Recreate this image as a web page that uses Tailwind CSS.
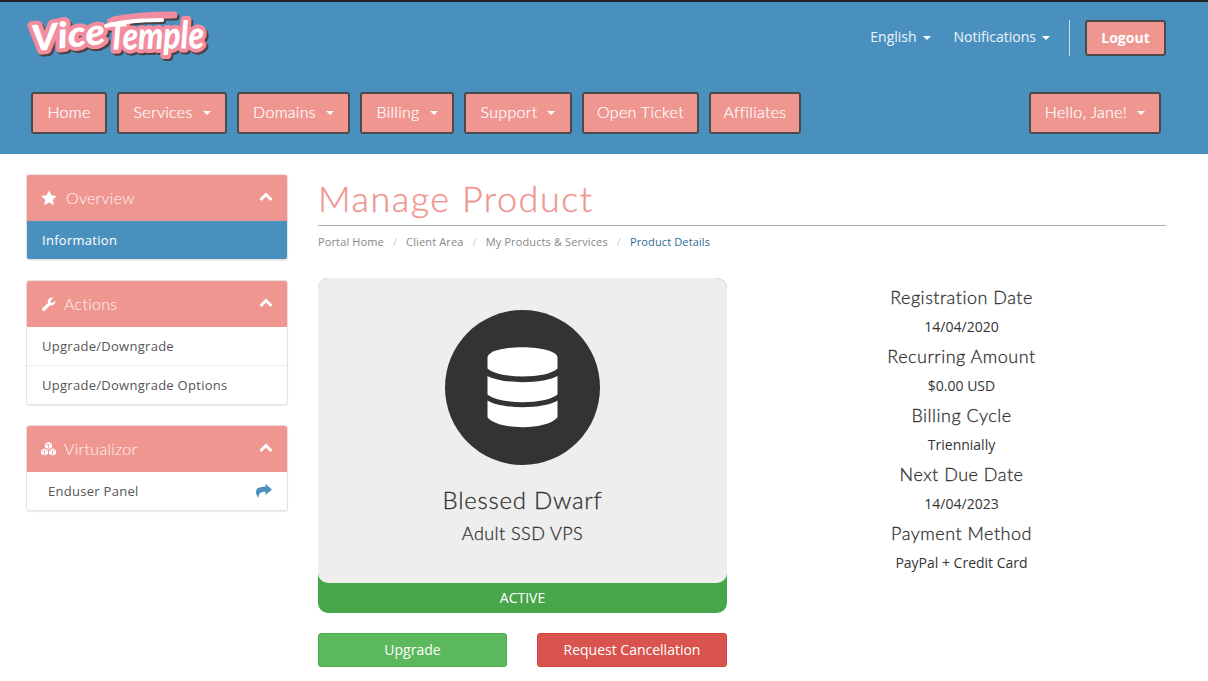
<!DOCTYPE html>
<html lang="en">
<head>
<meta charset="utf-8">
<title>Manage Product</title>
<script src="https://cdn.jsdelivr.net/npm/@tailwindcss/browser@4"></script>
</head>
<body class="bg-white font-['Open_Sans',sans-serif] text-[#333] text-sm overflow-hidden h-[681px]">
<header class="h-[154px] bg-[#4a90bf] border-t-2 border-[#222] flex flex-col">
  <div class="h-[90px] shrink-0 flex justify-between pl-[24px] pr-[42px]">
    <svg class="mt-[4px] overflow-visible" width="186" height="64" viewBox="0 0 186 64" role="img" aria-label="Vice Temple">
      <defs>
        <g id="mark" font-family="Lato, sans-serif" font-weight="900" font-style="italic">
          <text x="7" y="42" font-size="36" textLength="74" lengthAdjust="spacingAndGlyphs" transform="rotate(-6 40 30)">Vice</text>
          <text x="84" y="43" font-size="38" textLength="96" lengthAdjust="spacingAndGlyphs" transform="rotate(-1 130 30)">Temple</text>
          <path d="M82 20C96 16 116 14 138 14" fill="none" stroke-width="4" stroke-linecap="round"/>
        </g>
      </defs>
      <path d="M90 14C110 10 130 9 150 9" fill="none" stroke="#444" stroke-width="7" stroke-linecap="round" transform="translate(2 2)"/>
      <use href="#mark" fill="#444" stroke="#444" stroke-width="8" stroke-linejoin="round" transform="translate(2 2)"/>
      <path d="M90 14C110 10 130 9 150 9" fill="none" stroke="#f28c9e" stroke-width="7" stroke-linecap="round"/>
      <use href="#mark" fill="#f28c9e" stroke="#f28c9e" stroke-width="8" stroke-linejoin="round"/>
      <g font-family="Lato, sans-serif" font-weight="900" font-style="italic" fill="#fff">
        <text x="7" y="42" font-size="36" textLength="74" lengthAdjust="spacingAndGlyphs" transform="rotate(-6 40 30)">Vice</text>
        <text x="84" y="43" font-size="38" textLength="96" lengthAdjust="spacingAndGlyphs" transform="rotate(-1 130 30)">Temple</text>
        <path d="M82 20C96 16 116 14 138 14" fill="none" stroke="#fff" stroke-width="4" stroke-linecap="round"/>
      </g>
    </svg>
    <div class="flex items-start pt-[18px] text-white/90">
      <a class="h-[36px] pb-[2px] flex items-center gap-[6px] mr-[24px]">English <i class="w-0 h-0 border-x-4 border-x-transparent border-t-4 border-t-white mt-[2px]"></i></a>
      <a class="h-[36px] pb-[2px] flex items-center gap-[6px] mr-[19px] -ml-px">Notifications <i class="w-0 h-0 border-x-4 border-x-transparent border-t-4 border-t-white mt-[2px]"></i></a>
      <div class="w-px h-[36px] bg-white/70 mr-[15px]"></div>
      <button class="w-[81px] h-[36px] pb-[1px] rounded-[3px] bg-[#ef9691] border-2 border-[#4b4b4b] text-white font-bold text-[14px]">Logout</button>
    </div>
  </div>
  <nav class="flex items-start justify-between pl-[31px] pr-[47px] font-['Lato',sans-serif] font-light [-webkit-text-stroke:0.2px_#fff] text-[16px] tracking-[0.3px] text-white">
    <div class="flex gap-[10px]">
      <a class="w-[76px] h-[42px] pb-[2px] rounded-[3px] bg-[#ef9691] border-2 border-[#4b4b4b] flex items-center justify-center">Home</a>
      <a class="w-[110px] h-[42px] pb-[2px] rounded-[3px] bg-[#ef9691] border-2 border-[#4b4b4b] flex items-center justify-center gap-[10px]">Services <i class="w-0 h-0 border-x-4 border-x-transparent border-t-4 border-t-white mt-[2px]"></i></a>
      <a class="w-[113px] h-[42px] pb-[2px] rounded-[3px] bg-[#ef9691] border-2 border-[#4b4b4b] flex items-center justify-center gap-[10px]">Domains <i class="w-0 h-0 border-x-4 border-x-transparent border-t-4 border-t-white mt-[2px]"></i></a>
      <a class="w-[94px] h-[42px] pb-[2px] rounded-[3px] bg-[#ef9691] border-2 border-[#4b4b4b] flex items-center justify-center gap-[10px]">Billing <i class="w-0 h-0 border-x-4 border-x-transparent border-t-4 border-t-white mt-[2px]"></i></a>
      <a class="w-[108px] h-[42px] pb-[2px] rounded-[3px] bg-[#ef9691] border-2 border-[#4b4b4b] flex items-center justify-center gap-[10px]">Support <i class="w-0 h-0 border-x-4 border-x-transparent border-t-4 border-t-white mt-[2px]"></i></a>
      <a class="w-[117px] h-[42px] pb-[2px] rounded-[3px] bg-[#ef9691] border-2 border-[#4b4b4b] flex items-center justify-center">Open Ticket</a>
      <a class="w-[92px] h-[42px] pb-[2px] rounded-[3px] bg-[#ef9691] border-2 border-[#4b4b4b] flex items-center justify-center">Affiliates</a>
    </div>
    <a class="w-[132px] h-[42px] pb-[2px] rounded-[3px] bg-[#ef9691] border-2 border-[#4b4b4b] flex items-center justify-center gap-[10px]">Hello, Jane! <i class="w-0 h-0 border-x-4 border-x-transparent border-t-4 border-t-white mt-[2px]"></i></a>
  </nav>
</header>

<div class="flex pl-[26px] pr-[42px]">
  <aside class="w-[262px] shrink-0 pt-[20px] flex flex-col gap-[20px] text-[13px] tracking-[0.28px] text-[#555]">
    <section class="h-[86px] rounded-[3px] border border-[#e3e3e3] shadow-[0_1px_1px_rgba(0,0,0,0.08)] overflow-hidden">
      <h3 class="h-[46px] bg-[#ef9691] text-white/90 flex items-center pl-[14px] pr-[14px] font-['Lato',sans-serif] font-light text-[16px]">
        <svg class="w-[16px] h-[16px] mr-[9px] fill-white" viewBox="0 0 24 24"><path d="M12 .5l3.600 7.400 8 1.100-5.800 5.700 1.400 8-7.200-3.800-7.200 3.800 1.400-8L.4 9l8-1.100z"/></svg>
        Overview
        <svg class="w-[14px] h-[14px] ml-auto -mt-[3px] stroke-white fill-none" stroke-width="3" viewBox="0 0 14 14"><path d="M1.500 10L7 4.500 12.500 10"/></svg>
      </h3>
      <a class="h-[38px] bg-[#4a90bf] text-white flex items-center pl-[15px]">Information</a>
    </section>
    <section class="h-[125px] rounded-[3px] border border-[#e3e3e3] shadow-[0_1px_1px_rgba(0,0,0,0.08)] overflow-hidden">
      <h3 class="h-[46px] bg-[#ef9691] text-white/90 flex items-center pl-[15px] pr-[14px] font-['Lato',sans-serif] font-light text-[16px]">
        <svg class="w-[14px] h-[15px] mr-[8px] fill-white" viewBox="0 0 24 24"><path d="M23 6.500c0 3.900-3.100 7-7 7-.8 0-1.600-.1-2.300-.4L5.200 22.400c-1.200 1.200-3.200 1.200-4.400 0s-1.200-3.200 0-4.400L10.500 9.300c-.3-.8-.5-1.700-.5-2.800 0-3.900 3.100-6.500 7-6.500.9 0 1.700.2 2.400.5L15 5v4h4l4-4c0 .5 0 1 0 1.500z"/></svg>
        Actions
        <svg class="w-[14px] h-[14px] ml-auto -mt-[3px] stroke-white fill-none" stroke-width="3" viewBox="0 0 14 14"><path d="M1.500 10L7 4.500 12.500 10"/></svg>
      </h3>
      <a class="h-[39px] flex items-center pl-[15px] border-b border-[#eee]">Upgrade/Downgrade</a>
      <a class="h-[38px] flex items-center pl-[15px]">Upgrade/Downgrade Options</a>
    </section>
    <section class="h-[86px] rounded-[3px] border border-[#e3e3e3] shadow-[0_1px_1px_rgba(0,0,0,0.08)] overflow-hidden">
      <h3 class="h-[46px] bg-[#ef9691] text-white/90 flex items-center pl-[14px] pr-[14px] font-['Lato',sans-serif] font-light text-[16px]">
        <svg class="w-[15px] h-[14px] mr-[8px] fill-white" viewBox="0 0 30 28"><path d="M15 0l7 3v8l-7 3-7-3V3z"/><path d="M7 13l7 3v8l-7 3-7-3v-8z"/><path d="M23 13l7 3v8l-7 3-7-3v-8z"/><path d="M9.500 3.500L15 5.800l5.500-2.300M15 6v7M1.500 16.500L7 18.800l5.500-2.300M7 19v7M17.500 16.500L23 18.800l5.500-2.300M23 19v7" fill="none" stroke="#ef9691" stroke-width="1.500"/></svg>
        Virtualizor
        <svg class="w-[14px] h-[14px] ml-auto -mt-[3px] stroke-white fill-none" stroke-width="3" viewBox="0 0 14 14"><path d="M1.500 10L7 4.500 12.500 10"/></svg>
      </h3>
      <a class="h-[38px] flex items-center pl-[21px] pr-[15px]">Enduser Panel
        <svg class="w-[16px] h-[14px] ml-auto fill-[#4a90bf]" viewBox="0 0 16 14"><path d="M9.500 0L16 5.500 9.500 11V7.800C5 7.800 2.500 9 2.600 14 .5 11.500 0 10 0 8c0-4.500 4.500-5.200 9.500-5.200z"/></svg>
      </a>
    </section>
  </aside>

  <main class="flex-1 ml-[30px] min-w-0">
    <h1 class="h-[72px] pt-[21px] border-b border-[#b9a9a8] font-['Lato',sans-serif] font-light [-webkit-text-stroke:0.35px_#ef9691] text-[#ef9691] text-[36px] leading-[46px] tracking-[1.5px]">Manage Product</h1>
    <ol class="flex h-[52px] items-start pt-[8px] text-[11px] tracking-[0.13px] text-[#888]">
      <li>Portal Home</li><li class="text-[#ccc] mx-[9px]">/</li>
      <li>Client Area</li><li class="text-[#ccc] mx-[9px]">/</li>
      <li>My Products &amp; Services</li><li class="text-[#ccc] mx-[9px]">/</li>
      <li class="text-[#2e6a93]">Product Details</li>
    </ol>
    <div class="flex">
      <div class="w-[409px] shrink-0">
        <div class="h-[335px] rounded-[10px] bg-[#47a64a] flex flex-col">
          <div class="h-[305px] rounded-[10px] bg-[#eee] flex flex-col items-center pt-[32px]">
            <div class="w-[155px] h-[155px] rounded-full bg-[#333] flex items-center justify-center">
              <svg class="w-[71px] h-[81px] fill-white" viewBox="486.500 346.500 71 81"><path d="M487 357C487 351 503 346.700 522 346.700S557 351 557 357V368C552 373 538 376 522 376S492 373 487 368Z"/><path d="M487 375.500C493 379 507 381.700 522 381.700S551 379 557 375.500V394C551 399 537 401.700 522 401.700S493 399 487 394Z"/><path d="M487 400C493 404 507 406.700 522 406.700S551 404 557 400V416.700C552 423 538 426.700 522 426.700S492 423 487 416.700Z"/></svg>
            </div>
            <div class="mt-[19px] font-['Lato',sans-serif] font-light [-webkit-text-stroke:0.3px_#333] text-[24px] leading-[32px] tracking-[0.75px]">Blessed Dwarf</div>
            <div class="mt-[4px] font-['Lato',sans-serif] font-light [-webkit-text-stroke:0.3px_#333] text-[18px] leading-[26px] tracking-[0.45px]">Adult SSD VPS</div>
          </div>
          <div class="h-[30px] flex items-center justify-center text-white text-[14px]">ACTIVE</div>
        </div>
        <div class="flex justify-between mt-[20px]">
          <button class="w-[189px] h-[34px] rounded-[3px] bg-[#5cb85c] border border-[#4cae4c] text-white text-[14px]">Upgrade</button>
          <button class="w-[190px] h-[34px] rounded-[3px] bg-[#d9534f] border border-[#d43f3a] text-white text-[14px]">Request Cancellation</button>
        </div>
      </div>
      <dl class="flex-1 ml-[30px] text-center pt-[4px]">
        <dt class="h-[30px] leading-[30px] font-['Lato',sans-serif] font-light [-webkit-text-stroke:0.3px_#333] text-[18px] tracking-[0.5px]">Registration Date</dt>
        <dd class="h-[29px] leading-[29px]">14/04/2020</dd>
        <dt class="h-[30px] leading-[30px] font-['Lato',sans-serif] font-light [-webkit-text-stroke:0.3px_#333] text-[18px] tracking-[0.5px]">Recurring Amount</dt>
        <dd class="h-[29px] leading-[29px]">$0.00 USD</dd>
        <dt class="h-[30px] leading-[30px] font-['Lato',sans-serif] font-light [-webkit-text-stroke:0.3px_#333] text-[18px] tracking-[0.5px]">Billing Cycle</dt>
        <dd class="h-[29px] leading-[29px]">Triennially</dd>
        <dt class="h-[30px] leading-[30px] font-['Lato',sans-serif] font-light [-webkit-text-stroke:0.3px_#333] text-[18px] tracking-[0.5px]">Next Due Date</dt>
        <dd class="h-[29px] leading-[29px]">14/04/2023</dd>
        <dt class="h-[30px] leading-[30px] font-['Lato',sans-serif] font-light [-webkit-text-stroke:0.3px_#333] text-[18px] tracking-[0.5px]">Payment Method</dt>
        <dd class="h-[29px] leading-[29px]">PayPal + Credit Card</dd>
      </dl>
    </div>
  </main>
</div>
</body>
</html>
